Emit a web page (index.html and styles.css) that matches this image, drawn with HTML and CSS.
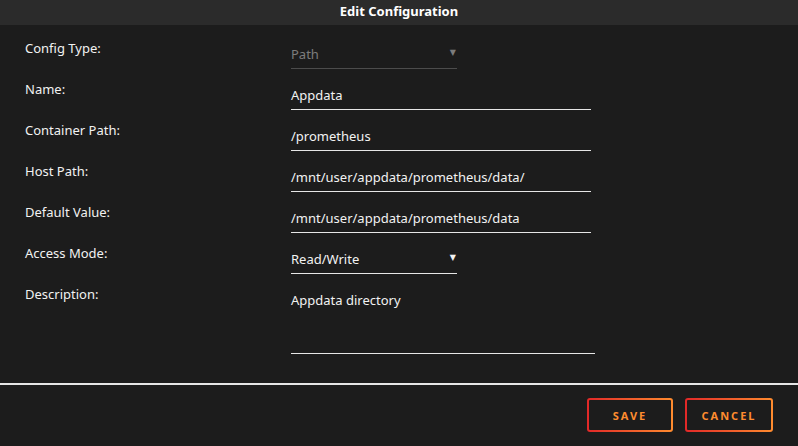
FILE: index.html
```html
<!DOCTYPE html>
<html lang="en">
<head>
<meta charset="utf-8">
<title>Edit Configuration</title>
<link rel="stylesheet" href="styles.css">
</head>
<body>
<div class="dialog">
  <div class="dialog-title">Edit Configuration</div>
  <div class="form">
    <div class="row">
      <div class="label">Config Type:</div>
      <div class="field select disabled"><span>Path</span><span class="caret">&#9660;</span></div>
    </div>
    <div class="row">
      <div class="label">Name:</div>
      <div class="field">Appdata</div>
    </div>
    <div class="row">
      <div class="label">Container Path:</div>
      <div class="field">/prometheus</div>
    </div>
    <div class="row">
      <div class="label">Host Path:</div>
      <div class="field">/mnt/user/appdata/prometheus/data/</div>
    </div>
    <div class="row">
      <div class="label">Default Value:</div>
      <div class="field">/mnt/user/appdata/prometheus/data</div>
    </div>
    <div class="row">
      <div class="label">Access Mode:</div>
      <div class="field select"><span>Read/Write</span><span class="caret">&#9660;</span></div>
    </div>
    <div class="row row-tall">
      <div class="label">Description:</div>
      <div class="field textarea">Appdata directory</div>
    </div>
  </div>
  <div class="divider"></div>
  <div class="actions">
    <button class="btn btn-save">SAVE</button>
    <button class="btn btn-cancel">CANCEL</button>
  </div>
</div>
</body>
</html>
```
FILE: styles.css
```css
* { box-sizing: border-box; }

html, body {
  margin: 0;
  height: 100%;
  background: #1c1c1c;
}

body {
  font-family: "Noto Sans", "DejaVu Sans", sans-serif;
  font-size: 13px;
  color: #f2f2f2;
}

.dialog {
  width: 798px;
  height: 446px;
  display: flex;
  flex-direction: column;
}

.dialog-title {
  height: 25px;
  background: #2b2b2b;
  text-align: center;
  font-weight: bold;
  font-size: 13px;
  line-height: 22px;
  color: #ffffff;
}

.form {
  padding: 15px 0 0 25px;
  display: flex;
  flex-direction: column;
}

.row {
  display: flex;
  height: 41px;
}

.row-tall {
  height: auto;
}

.label {
  width: 266px;
  line-height: 17px;
}

.field {
  margin-top: 6px;
  width: 300px;
  height: 23px;
  line-height: 16px;
  border-bottom: 1px solid #e6e6e6;
}

.select {
  width: 166px;
  display: flex;
  justify-content: space-between;
}

.caret {
  font-size: 8px;
  line-height: 12px;
  padding-right: 1px;
}

.disabled {
  color: #7c7c7c;
  border-bottom-color: #4c4c4c;
}

.textarea {
  width: 304px;
  height: 62px;
}

.divider {
  margin-top: 29px;
  height: 2px;
  background: #e6e6e6;
}

.actions {
  display: flex;
  justify-content: flex-end;
  gap: 12px;
  padding: 13px 25px 0 0;
}

.btn {
  height: 34px;
  padding: 0;
  border: 2px solid transparent;
  border-radius: 3px;
  background:
    linear-gradient(#1c1c1c, #1c1c1c) padding-box,
    linear-gradient(90deg, #e22828, #ff8c2f) border-box;
  color: #ff8c2f;
  font-family: "Noto Sans", "DejaVu Sans", sans-serif;
  font-weight: bold;
  font-size: 11px;
  letter-spacing: 2px;
}

.btn-save { width: 86px; }
.btn-cancel { width: 88px; }
```
